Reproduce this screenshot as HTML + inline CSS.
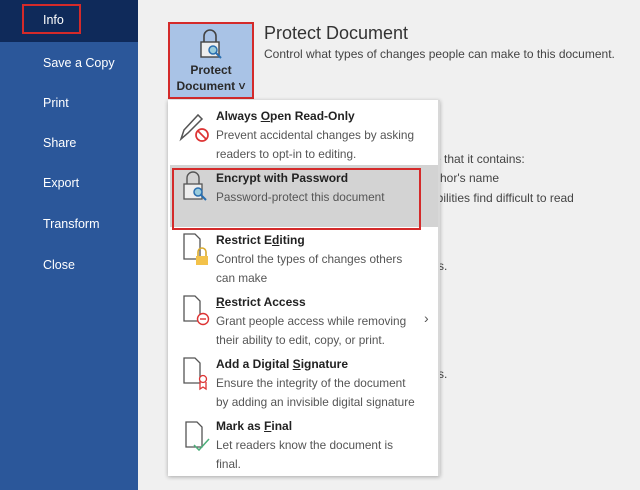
<!DOCTYPE html>
<html><head><style>
*{margin:0;padding:0;box-sizing:border-box}
body{width:640px;height:490px;overflow:hidden;background:#f0f0f0;font-family:"Liberation Sans",sans-serif;position:relative;color:#333}
.side{position:absolute;left:0;top:0;width:138px;height:490px;background:#2b579a}
.side .sel{position:absolute;left:0;top:0;width:138px;height:42px;background:#0f2a5a}
.side div.t{position:absolute;left:43px;color:#fff;font-size:12.5px}
.abs{position:absolute;white-space:nowrap}
.menu{position:absolute;left:168px;top:100px;width:272px;height:376px;background:#fff;box-shadow:0 1px 4px rgba(0,0,0,.3)}
.ti{position:absolute;left:216px;font-size:12px;font-weight:bold;color:#222;white-space:nowrap}
.de{position:absolute;left:216px;font-size:11.8px;color:#555;line-height:18.5px;white-space:nowrap}
.bg{font-size:12px;color:#444}
</style></head><body>
<div class="side">
<div class="sel"></div>
<div style="position:absolute;left:22px;top:4px;width:59px;height:30px;border:2px solid #d42a2a"></div>
<div class="t" style="top:13px">Info</div>
<div class="t" style="top:56px">Save a Copy</div>
<div class="t" style="top:96px">Print</div>
<div class="t" style="top:136px">Share</div>
<div class="t" style="top:176px">Export</div>
<div class="t" style="top:217px">Transform</div>
<div class="t" style="top:258px">Close</div>
</div>

<div style="position:absolute;left:168px;top:22px;width:86px;height:77px;background:#a9c3e6;border:2px solid #d42a2a"></div>
<svg class="abs" style="left:196px;top:28px" width="30" height="34" viewBox="0 0 30 34"><path d="M8 14V8a6 6 0 0 1 12 0v6" fill="none" stroke="#444" stroke-width="1.6"/><rect x="5" y="14" width="18" height="15" fill="#eee" stroke="#444" stroke-width="1.4"/><circle cx="17" cy="22" r="4" fill="#9cd" stroke="#2a6fb0" stroke-width="1.5"/><path d="M20 25l5 5" stroke="#2a6fb0" stroke-width="2"/></svg>
<div class="abs" style="left:168px;top:62px;width:86px;text-align:center;font-size:12px;font-weight:bold;color:#2a2a2a;line-height:16px">Protect<br>Document ˅</div>
<div class="abs" style="left:264px;top:23px;font-size:18px;color:#333">Protect Document</div>
<div class="abs" style="left:264px;top:47px;font-size:12px;color:#444">Control what types of changes people can make to this document.</div>

<div class="abs bg" style="left:430px;top:152px">re that it contains:</div>
<div class="abs bg" style="left:430px;top:171px">uthor's name</div>
<div class="abs bg" style="left:430px;top:191px">abilities find difficult to read</div>
<div class="abs bg" style="left:438px;top:259px">s.</div>
<div class="abs bg" style="left:438px;top:367px">s.</div>

<div class="menu"></div>
<div style="position:absolute;left:170px;top:165px;width:268px;height:62px;background:#d3d3d3"></div>
<div style="position:absolute;left:172px;top:168px;width:249px;height:62px;border:2px solid #d42a2a"></div>
<div style="position:absolute;left:438px;top:100px;width:2px;height:376px;background:#d8d8d8"></div>

<svg class="abs" style="left:178px;top:110px" width="34" height="34" viewBox="0 0 34 34"><path d="M3 29l3-9L20 5l4 4L10 23z" fill="none" stroke="#555" stroke-width="1.5"/><circle cx="24" cy="25" r="6" fill="none" stroke="#d33" stroke-width="1.7"/><path d="M20 21l8 8" stroke="#d33" stroke-width="1.7"/></svg>
<div class="ti" style="top:109px">Always <u>O</u>pen Read-Only</div>
<div class="de" style="top:126px">Prevent accidental changes by asking<br>readers to opt-in to editing.</div>

<svg class="abs" style="left:182px;top:170px" width="30" height="34" viewBox="0 0 30 34"><path d="M5 14V8a6 6 0 0 1 12 0v6" fill="none" stroke="#555" stroke-width="1.4"/><rect x="2" y="14" width="18" height="15" fill="#eee" stroke="#555" stroke-width="1.3"/><circle cx="16" cy="22" r="4" fill="#9cd" stroke="#2a6fb0" stroke-width="1.5"/><path d="M19 25l5 5" stroke="#2a6fb0" stroke-width="2"/></svg>
<div class="ti" style="top:171px">Encrypt with Password</div>
<div class="de" style="top:188px">Password-protect this document</div>

<svg class="abs" style="left:182px;top:232px" width="30" height="36" viewBox="0 0 30 36"><path d="M2 2h11l5 5v20H2z" fill="none" stroke="#555" stroke-width="1.3"/><path d="M16 24v-4a4 4 0 0 1 8 0v4" fill="none" stroke="#d9a92a" stroke-width="1.6"/><rect x="14" y="24" width="12" height="9" fill="#f3c24a"/></svg>
<div class="ti" style="top:233px">Restrict E<u>d</u>iting</div>
<div class="de" style="top:250px">Control the types of changes others<br>can make</div>

<svg class="abs" style="left:182px;top:294px" width="30" height="36" viewBox="0 0 30 36"><path d="M2 2h11l5 5v20H2z" fill="none" stroke="#555" stroke-width="1.3"/><circle cx="21" cy="25" r="5.5" fill="#fff" stroke="#d33" stroke-width="1.4"/><path d="M18 25h6" stroke="#d33" stroke-width="1.4"/></svg>
<div class="ti" style="top:295px"><u>R</u>estrict Access</div>
<div class="de" style="top:312px">Grant people access while removing<br>their ability to edit, copy, or print.</div>
<div class="abs" style="left:424px;top:310px;font-size:14px;color:#555">›</div>

<svg class="abs" style="left:182px;top:356px" width="30" height="36" viewBox="0 0 30 36"><path d="M2 2h11l5 5v20H2z" fill="none" stroke="#555" stroke-width="1.3"/><circle cx="21" cy="23" r="3.5" fill="#fff" stroke="#d33" stroke-width="1.3"/><path d="M18 26v7l3-2 3 2v-7" fill="none" stroke="#d33" stroke-width="1.3"/></svg>
<div class="ti" style="top:357px">Add a Digital <u>S</u>ignature</div>
<div class="de" style="top:374px">Ensure the integrity of the document<br>by adding an invisible digital signature</div>

<svg class="abs" style="left:184px;top:420px" width="30" height="34" viewBox="0 0 30 34"><path d="M2 2h11l5 5v20H2z" fill="none" stroke="#555" stroke-width="1.3"/><path d="M10 25l5 5 10-11" fill="none" stroke="#4caf7a" stroke-width="1.5"/></svg>
<div class="ti" style="top:419px">Mark as <u>F</u>inal</div>
<div class="de" style="top:436px">Let readers know the document is<br>final.</div>
</body></html>
